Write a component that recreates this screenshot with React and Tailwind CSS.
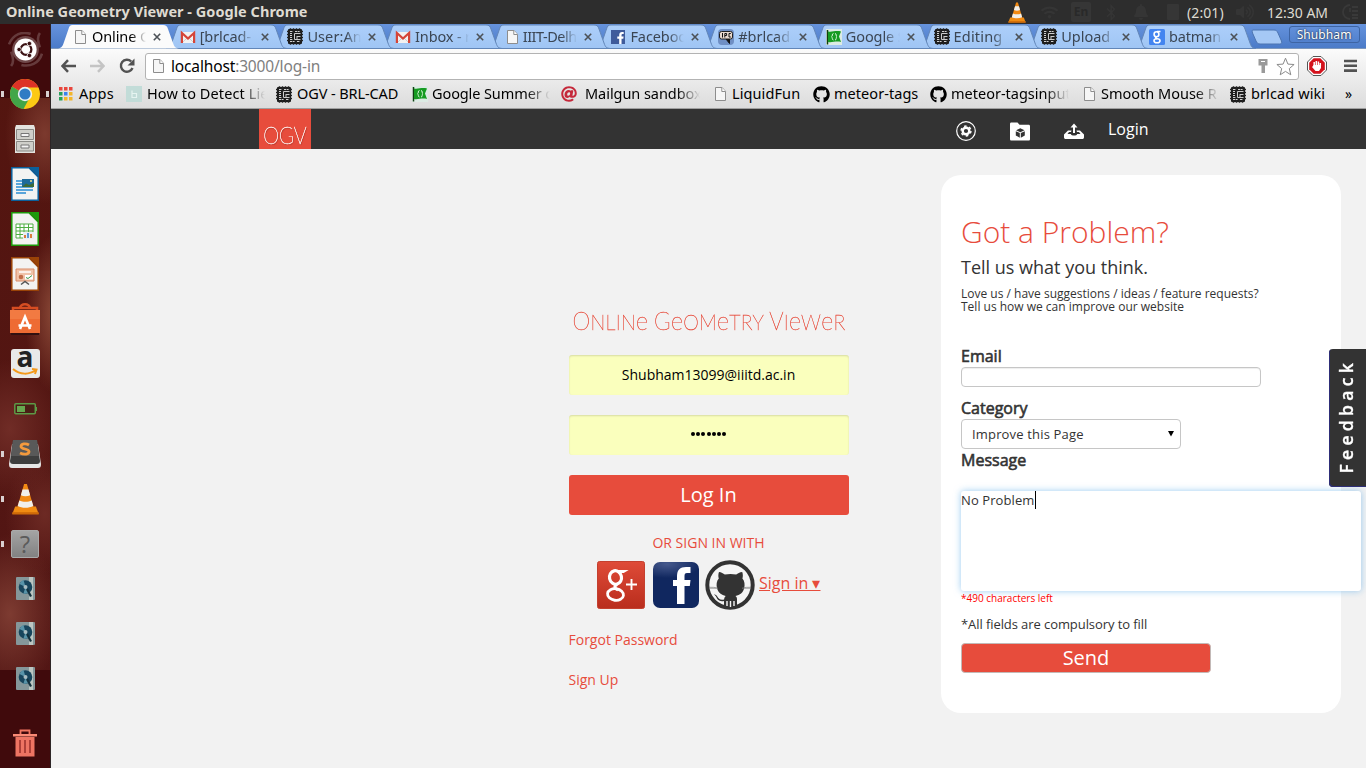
import React from "react";
import { FaGithub, FaFacebookF, FaAt, FaBluetoothB, FaBell, FaWifi, FaVolumeUp } from "react-icons/fa";

const PageIcon = () => (
  <svg className="h-4 w-[13px] shrink-0" viewBox="0 0 13 16">
    <path d="M1.5 1.5h6.5l3.5 3.8v9.2h-10z" fill="#f6f6f6" stroke="#8d8d8d" />
    <path d="M7.8 1.5v4h3.7" fill="#fff" stroke="#8d8d8d" />
  </svg>
);

const Gmail = () => (
  <svg className="h-4 w-4 shrink-0" viewBox="0 0 16 16">
    <path d="M1 3h14v11H1z" fill="#f3f1f1" />
    <path d="M2 14l5-5M14 14L9 9" stroke="#cfcfcf" />
    <path d="M1.9 14V4L8 9.500 14.100 4V14" fill="none" stroke="#d54438" strokeWidth="2.200" />
  </svg>
);

const Brl = () => (
  <svg className="h-[17px] w-4 shrink-0" viewBox="0 0 16 17">
    <rect x="1" y="1" width="14" height="15" rx="1" fill="#1b1b1b" />
    <path d="M0 3.500h16M0 6.500h16M0 9.500h16M0 12.500h16" stroke="#222" strokeWidth="1.600" />
    <path d="M3.500 .3v16.400M6.500 .3v16.400M9.500 .3v16.400M12.500 .3v16.400" stroke="#222" strokeWidth="1.600" />
    <path d="M3 3.500h3M8 3.500h5M3 5.500h2M3 7.500h2M3 9.500h2M3 11.500h3M3 13.500h5M10 13.500h3" stroke="#d0d0d0" strokeDasharray="2 .600" />
    <path d="M13.500 5.500H7.500v6h6" fill="none" stroke="#ccc" />
    <path d="M10 8.500h3.500M10 8v3" stroke="#ccc" />
  </svg>
);

const Flag = () => (
  <svg className="h-4 w-4 shrink-0" viewBox="0 0 16 16">
    <rect width="16" height="16" fill="#dcebe4" />
    <path d="M1.500 1v14.500" stroke="#123c12" strokeWidth="1.500" />
    <path d="M2 2.500c4 1 8-1.500 13 0l-2 5 2 5.500c-5-1.500-9 1-13 0z" fill="#169b22" />
    <path d="M7.500 4.500c-2 0-.5 3-2 3.300 1.500.3 0 3.200 2 3.200M9 4.500c2 0 .5 3 2 3.300-1.500.3 0 3.200-2 3.200" fill="none" stroke="#d7f5d7" />
  </svg>
);

const Fb = () => (
  <span className="flex h-[14px] w-[14px] shrink-0 items-end justify-end bg-[#3f5b9b]">
    <FaFacebookF className="h-3 w-[9px] text-white" />
  </span>
);

const Irc = () => (
  <svg className="h-4 w-4 shrink-0" viewBox="0 0 16 16">
    <rect width="16" height="16" rx="4" fill="#6f8fc4" />
    <path d="M8 10l3.500 4.500V10" fill="#111" stroke="#111" />
    <rect x="1.500" y="2.500" width="13" height="7.500" rx="2" fill="#e9d9cf" stroke="#222" />
    <path d="M4.500 4v4.500M6.800 8.500v-4h1.800v2H7M12.800 4.500h-1.800v3.500h1.800" fill="none" stroke="#111" />
  </svg>
);

const GSearch = () => (
  <svg className="h-4 w-4 shrink-0" viewBox="0 0 16 16">
    <rect width="16" height="16" rx="1.500" fill="#4384f0" />
    <g fill="none" stroke="#fff" strokeWidth="1.600">
      <ellipse cx="7.500" cy="5.200" rx="2.400" ry="2.500" />
      <path d="M8 2.500h3.500M8 7.800c-2 .5-2 1.500 0 2" />
      <ellipse cx="8" cy="11.700" rx="3" ry="2" />
    </g>
  </svg>
);

const TABS = [
  { t: "Online G", icon: <PageIcon />, w: "pl-[16px]", g: "gap-[5px]" },
  { t: "[brlcad-", icon: <Gmail />, k: "tracking-[-0.1px]" },
  { t: "User:An", icon: <Brl />, k: "tracking-[0.1px]" },
  { t: "Inbox - r", icon: <Gmail />, k: "tracking-[-0.15px]" },
  { t: "IIIT-Delh", icon: <PageIcon />, w: "pl-[17px]", g: "gap-[4px]", k: "tracking-[-0.5px]" },
  { t: "Faceboo", icon: <Fb />, w: "pl-[15px]", g: "gap-[5px]" },
  { t: "#brlcad", icon: <Irc />, k: "tracking-[0px]" },
  { t: "Google S", icon: <Flag /> },
  { t: "Editing", icon: <Brl />, k: "tracking-[0.2px]" },
  { t: "Upload", icon: <Brl />, k: "tracking-[0px]" },
  { t: "batman", icon: <GSearch />, k: "tracking-[-0.1px]" },
];

function Tab({ tab, active, index }) {
  return (
    <div className="relative h-[24px] w-[107.7px] shrink-0" style={{ zIndex: active ? 30 : 20 - index }}>
      <svg className="absolute top-0 left-0 h-[25px] w-[122px]" viewBox="0 0 122 25">
        <defs>
          <linearGradient id="tabfill" x1="0" y1="0" x2="0" y2="1">
            <stop offset="0" stopColor="#adcffa" />
            <stop offset="1" stopColor="#9fc5f4" />
          </linearGradient>
        </defs>
        <path
          d="M0 24.500C4 24 4.500 22 6 18L10.500 5C11.500 2 12 1 15 1H105C108 1 109 2 110 5L115 19C116.500 23 117 24 121 24.500z"
          fill={active ? "#fbfbfb" : "url(#tabfill)"}
          stroke={active ? "none" : "#6286b8"}
        />
      </svg>
      <div className={"relative flex h-full items-center pt-px " + (tab.w || "pl-[14px]") + " " + (tab.g || "gap-1")}>
        {tab.icon}
        <span className={"w-[54px] overflow-x-clip text-[14.5px] leading-[24px] whitespace-nowrap [mask-image:linear-gradient(90deg,#000_72%,transparent)] " + (tab.k || "tracking-[-0.1px]") + " -mt-[2px] " + (active ? "text-black" : "text-[#3b4654]")}>{tab.t}</span>
        <svg className="absolute top-[9px] left-[95px] h-2 w-2" viewBox="0 0 8 8">
          <path d="M.8.8l6.400 6.400M7.200.8L.8 7.200" stroke="#4c5157" strokeWidth="1.600" />
        </svg>
      </div>
    </div>
  );
}

const AppsIcon = () => (
  <svg className="ml-px h-[14px] w-[14px] shrink-0" viewBox="0 0 14 14">
    {["#e8453c", "#e8453c", "#e8453c", "#27a05a", "#3c82ee", "#f3b62a", "#27a05a", "#f3b62a", "#f3b62a"].map((c, i) => (
      <rect key={i} x={(i % 3) * 5} y={Math.floor(i / 3) * 5} width="3.500" height="3.500" fill={c} />
    ))}
  </svg>
);

const Tumb = () => (
  <svg className="h-4 w-4" viewBox="0 0 16 16">
    <rect width="16" height="16" fill="#c2dcd8" />
    <path d="M6 4.500v7h4.500v-4h-4" fill="none" stroke="#e6f4f1" strokeWidth="1.200" />
  </svg>
);

const MARKS = [
  { t: "Apps", icon: <AppsIcon />, c: "w-[68px]", x: "w-[21px]", k: "tracking-[0.2px]" },
  { t: "How to Detect Lie", icon: <Tumb />, c: "w-[150px]", x: "w-[21px]", k: "tracking-[0.1px]", f: "w-[118px]" },
  { t: "OGV - BRL-CAD", icon: <Brl />, c: "w-[136px]", x: "w-[21px]", k: "tracking-[-0.1px]" },
  { t: "Google Summer o", icon: <Flag />, c: "w-[149px]", x: "w-[20px]", k: "tracking-[-0.1px]", f: "w-[118px]" },
  { t: "Mailgun sandbox", icon: <FaAt className="h-4 w-4 text-[#c5283a]" />, c: "w-[153px]", x: "w-[24px]", k: "tracking-[-0.05px]", f: "w-[115px]" },
  { t: "LiquidFun", icon: <PageIcon />, c: "w-[99px]", x: "w-[18px]", k: "tracking-[0.1px]" },
  { t: "meteor-tags", icon: <FaGithub className="h-[17px] w-[17px] text-black" />, c: "w-[117px]", x: "w-[21px]", k: "tracking-[0.05px]" },
  { t: "meteor-tagsinput", icon: <FaGithub className="h-[17px] w-[17px] text-black" />, c: "w-[153px]", x: "w-[21px]", k: "tracking-[0px]", f: "w-[118px]" },
  { t: "Smooth Mouse R", icon: <PageIcon />, c: "w-[147px]", x: "w-[18px]", k: "tracking-[0px]", f: "w-[118px]" },
  { t: "brlcad wiki", icon: <Brl />, c: "w-[115px]", x: "w-[21px]", k: "tracking-[0.1px]" },
];

const Vlc = ({ className }) => (
  <svg className={className} viewBox="0 0 30 34">
    <path d="M4 25h22l3 8H1z" fill="#f08c12" />
    <path d="M1 31h28v2.500H1z" fill="#cf6a08" />
    <path d="M13.500 1h3L24 27c-4 3-14 3-18 0z" fill="#f28a14" />
    <path d="M11.800 7h6.400l1.700 6c-3 1.500-7 1.500-9.800 0zM8.400 18.500c4 2 9.500 2 13.200 0l1.700 6c-5 2.500-12 2.500-16.600 0z" fill="#f0efec" />
  </svg>
);

const Doc = ({ color, children }) => (
  <svg className="h-[34px] w-7" viewBox="0 0 28 34">
    <path d="M.8.8H18L27.200 10v23.200H.8z" fill="#f3f3f2" stroke={color} strokeWidth="1.500" />
    <path d="M18 0h10v10z" fill={color} />
    {children}
  </svg>
);

const Disk = () => (
  <svg className="h-[23px] w-[19px]" viewBox="0 0 19 23">
    <rect width="19" height="23" rx="1" fill="#85979a" />
    <path d="M13 0h4v23h-4z" fill="#bcc6c2" />
    <circle cx="9.500" cy="10" r="6.800" fill="#17455c" />
    <path d="M9.500 10L3.500 7a7 7 0 014-4zM9.500 10l4 5a7 7 0 01-6 1.500z" fill="#5793a8" />
    <circle cx="9.500" cy="10" r="2" fill="#a9bcc0" />
    <path d="M11 12l4 7.500" stroke="#12303d" strokeWidth="2.200" />
  </svg>
);

const Chrome = () => (
  <svg className="mt-px h-[30px] w-[30px]" viewBox="0 0 30 30">
    <circle cx="15" cy="15" r="15" fill="#fcc914" />
    <path d="M15 15L2 7.500A15 15 0 0013.500 30L20 18z" fill="#42a648" />
    <path d="M15 15L2 7.500A15 15 0 0128.500 8.500H15z" fill="#dd3227" />
    <circle cx="15" cy="15" r="7.200" fill="#eef2f4" />
    <circle cx="15" cy="15" r="5.600" fill="#2f7cc4" />
  </svg>
);

const LAUNCH = [
  { icon: (
    <svg className="mt-px h-[35px] w-[35px]" viewBox="0 0 34 34">
      <circle cx="17" cy="17" r="13" fill="#70494a" />
      <path d="M1 12C5 2 14-1 22 2M33 21c-3 10-12 13-20 11M31 1c-3 4-2 8 0 14M3 33c3-4 2-8 0-14" stroke="#7e5a5b" strokeWidth="2.500" fill="none" opacity=".6" />
      <circle cx="17" cy="17" r="10.800" fill="#fff" />
      <circle cx="17.500" cy="17" r="5.200" fill="none" stroke="#3c1315" strokeWidth="2.200" />
      <g fill="#3c1315" stroke="#fff" strokeWidth=".8"><circle cx="10.800" cy="17" r="2.200" /><circle cx="20.800" cy="11.200" r="2.200" /><circle cx="20.800" cy="22.800" r="2.200" /></g>
    </svg>) },
  { icon: <Chrome />, run: true, focus: true },
  { icon: (
    <svg className="h-7 w-[22px]" viewBox="0 0 22 28">
      <path d="M2 0h18l1 3v25H1V3z" fill="#e3e3df" />
      <path d="M2.500 4.500h17v10h-17zM2.500 16.500h17v9.500h-17z" fill="#cfcfca" stroke="#8a8a86" />
      <path d="M7 8.500h8v3H7zM7 20h8v3H7z" fill="#f3f3f3" stroke="#777" />
    </svg>) },
  { icon: (
    <Doc color="#0b609c"><path d="M5 14h7M5 17h7M5 20h17M5 23h17M5 26h10" stroke="#5aa5da" strokeWidth="2" /><path d="M11 12h12v8H11z" fill="#1d6a9a" /><path d="M11 20l4-3.500 3 1.500 5-2v4z" fill="#3d6a35" /><circle cx="20" cy="14" r="1" fill="#f4e18a" /></Doc>) },
  { icon: (
    <Doc color="#1d9a0a"><path d="M5 12h17v14H5z" fill="#fff" stroke="#4fae42" /><path d="M5 15.500h17M5 19h17M5 22.500h17M9 12v14M13 12v14M17.500 12v14" stroke="#4fae42" /><path d="M12 20h11v7H12z" fill="#e9eef2" /><path d="M14 26v-3M20 26v-4" stroke="#d97c3c" strokeWidth="2" /><path d="M17 26v-5" stroke="#5b9ad5" strokeWidth="2" /></Doc>) },
  { icon: (
    <Doc color="#9a4307"><path d="M5 12h18v12H5z" fill="#f0c3a9" stroke="#d98c68" /><path d="M8 15h12" stroke="#fff" strokeWidth="1.500" /><circle cx="10" cy="20" r="2.300" fill="#c26d48" /><path d="M14 18h8v4.500h-8z" fill="#fff" /><path d="M15 20.500l2 1 4-3" stroke="#3b9645" fill="none" /><path d="M10 27.500l4-3 4 3" stroke="#555" fill="none" strokeWidth="1.500" /></Doc>) },
  { icon: (
    <svg className="h-8 w-[30px]" viewBox="0 0 30 32">
      <path d="M0 7h30v23H0z" fill="#ee6b33" /><path d="M0 7h30v9H0z" fill="#f27a42" /><path d="M1 30h28v2H1z" fill="#321010" />
      <path d="M3 7V5h24v2M10 5c0-5 10-5 10 0" fill="none" stroke="#d64d22" strokeWidth="2.500" />
      <path d="M10 26l5-12 5 12M8.500 22.500h13" fill="none" stroke="#fff" strokeWidth="2.600" />
    </svg>) },
  { icon: (
    <span className="flex h-[29px] w-[29px] flex-col items-center rounded-[3px] bg-[#e9e9e9] font-['Open_Sans',sans-serif] text-[28px] font-bold text-[#222]">
      <span className="h-[19px] leading-[14px]">a</span>
      <svg className="h-2 w-[26px] shrink-0" viewBox="0 0 26 8"><path d="M1 1c7 6 16 6 23 1M20 1l4.500.5L23 6" fill="none" stroke="#f49a1c" strokeWidth="2" /></svg>
    </span>) },
  { icon: (
    <svg className="mt-px h-3 w-[23px]" viewBox="0 0 23 12"><rect x=".8" y=".8" width="20.500" height="10" rx="1" fill="#4a1e15" stroke="#5d9a46" strokeWidth="1.500" /><path d="M3 3h8v6H3z" fill="#66a84f" /><path d="M22.300 4v4" stroke="#5d9a46" strokeWidth="1.400" /></svg>) },
  { icon: (
    <svg className="h-[29px] w-8" viewBox="0 0 32 29"><path d="M3 5h26l3 20c0 3-1 4-3 4H3c-2 0-3-1-3-4z" fill="#e6e6e6" /><path d="M4 1h24l3 21c0 2-1 3-3 3H4c-2 0-3-1-3-3z" fill="#3e3e3e" /><path d="M4 1h24l2 16H2z" fill="#595959" /><path d="M20 6c-3-2-8-1.500-8 1.500s8 2 8 5-5 3.500-9 1.500" fill="none" stroke="#f39a3d" strokeWidth="2.800" /></svg>), run: true },
  { icon: <Vlc className="h-8 w-[29px]" />, run: true },
  { icon: (
    <span className="mt-px flex h-7 w-7 items-center justify-center rounded-[2px] border border-[#aaa] bg-gradient-to-b from-[#a4a4a4] to-[#828282] font-['Open_Sans',sans-serif] text-[24px] leading-[26px] text-[#5b5b5b]">?</span>), run: true },
  { icon: <Disk /> },
  { icon: <Disk /> },
  { icon: <Disk /> },
];

function Launcher() {
  return (
    <aside className="flex w-[51px] shrink-0 flex-col border-r border-[#2d2526] bg-[#400a0c] bg-[linear-gradient(180deg,#400a0c_0_74px,transparent_74px_646px,#400a0c_646px),radial-gradient(ellipse_40px_70px_at_45px_110px,#7c3a2e,transparent),radial-gradient(ellipse_30px_80px_at_55px_290px,#8c4a38,transparent),radial-gradient(ellipse_50px_70px_at_10px_405px,#702c26,transparent),radial-gradient(ellipse_40px_60px_at_45px_490px,#6d2a24,transparent),radial-gradient(ellipse_50px_80px_at_10px_590px,#7d3b31,transparent),linear-gradient(180deg,#54150f,#521615)] pt-[2px]">
      {LAUNCH.map((l, i) => (
        <div key={i} className="relative flex h-[45px] shrink-0 items-center justify-center">
          {l.run && <span className="absolute left-[1px] h-[6px] w-[3px] bg-[#d9d0d0]" />}
          {l.icon}
          {l.focus && <span className="absolute right-[1px] h-[6px] w-[3px] bg-[#d9d0d0]" />}
        </div>
      ))}
      <div className="mt-[28px] flex justify-center">
        <svg className="h-7 w-6" viewBox="0 0 24 28">
          <path d="M7.500 5V1.500h9V5" fill="none" stroke="#ef7560" strokeWidth="1.800" />
          <path d="M0 5h24v2.500H0z" fill="#fb8a76" />
          <path d="M2.500 8h19v19.500h-19z" fill="#ee7463" />
          <path d="M7 11v13M12 11v13M17 11v13" stroke="#a83b34" strokeWidth="1.800" />
        </svg>
      </div>
    </aside>
  );
}

const thin = "font-['Lato',sans-serif] font-thin";

function Octocat() {
  return (
    <svg className="h-[50px] w-[50px]" viewBox="0 0 50 50">
      <circle cx="25" cy="25" r="22.700" fill="#f5f5f5" stroke="#333" strokeWidth="4" />
      <path d="M14 12c-.8 2-.9 4.500-.2 6.500-2.300 2.500-2.600 6-1.800 9.500 1.200 5 4.700 7 8.700 8-1 1-1.500 2-1.600 3.500-4 .8-5.500-.6-6.800-3-.8-1.500-2-2.300-3.500-2 1.800.6 2.500 2.500 3.200 4 1.500 2.500 4 3 7 2.500V47h13v-7.500c0-1.800-.5-2.700-1.500-3.500 4.500-1 7.500-3 8.700-8 .8-3.500.5-7-1.800-9.500.7-2 .6-4.500-.2-6.500-2.400.2-4.500 1.500-6 2.600-3.800-.9-7.700-.9-11.400 0-1.600-1.200-3.500-2.400-5.800-2.600z" fill="#333" />
      <path d="M22 41v5M25.500 41v6M29 41v5" stroke="#f5f5f5" strokeWidth="1.400" />
      <path d="M4 27.300q5-.3 9 .8M4 28.300h9M46 27.300q-5-.3-9 .8M46 28.300h-9" stroke="#777" strokeWidth=".6" fill="none" />
    </svg>
  );
}

const E = () => <span className="text-[1.17em] lowercase">e</span>;

const field = "flex h-10 items-center justify-center rounded-[3px] bg-[#faffbd] pr-px pb-[2px] shadow-[inset_0_1px_2px_rgba(0,0,0,0.14)]";

function LoginForm() {
  return (
    <div className="ml-[518px] flex w-[280px] shrink-0 flex-col pt-[156px] text-[14px] text-[#e74c3c]">
      <h1 className={"flex h-[30px] scale-x-[0.9] items-center justify-center text-[22px] tracking-[0.3px] whitespace-pre uppercase [-webkit-text-stroke:0.4px_#e74c3c] " + thin}>
        <span><span className="text-[25px]">O</span>nlin<E /> <span className="text-[25px]">G</span><E />om<E />try <span className="text-[25px]">V</span>i<E />w<E />r</span>
      </h1>
      <div className={"mt-[20px] text-black " + field}>Shubham13099@iiitd.ac.in</div>
      <div className={"mt-5 gap-[1.3px] " + field}>
        {[0, 1, 2, 3, 4, 5, 6].map((i) => <span key={i} className="h-1 w-1 rounded-full bg-black" />)}
      </div>
      <button className="mt-5 flex h-10 items-center justify-center rounded-[3px] bg-[#e74c3c] pr-px text-[20px] text-white">Log In</button>
      <div className="mt-[18px] pr-px text-center leading-5">OR SIGN IN WITH</div>
      <div className="mt-[7px] flex h-[50px] items-center pl-7">
        <svg className="h-12 w-12" viewBox="0 0 48 48">
          <defs><linearGradient id="gp" x1="0" y1="0" x2="0" y2="1"><stop offset="0" stopColor="#df4b38" /><stop offset="1" stopColor="#b92d1d" /></linearGradient></defs>
          <rect x=".5" y=".5" width="47" height="47" rx="2" fill="url(#gp)" stroke="#c4402f" />
          <g fill="none" stroke="#fff">
            <ellipse cx="18.500" cy="16.500" rx="6" ry="6.800" strokeWidth="3.200" transform="rotate(-12 18.500 16.500)" />
            <path d="M19 9.700h10l-2.500 1.500h-4" strokeWidth="1.500" />
            <path d="M20 23.500c-4 2.500-2 4 1 5.500" strokeWidth="2.800" />
            <ellipse cx="18.500" cy="33.500" rx="8" ry="5.800" strokeWidth="2.800" transform="rotate(8 18.500 33.500)" />
            <path d="M34.500 18v11M29 23.500h11" strokeWidth="1.900" />
          </g>
        </svg>
        <span className="ml-2 flex h-[46px] w-[46px] items-center justify-center rounded-[7px] bg-[#10275f] bg-[radial-gradient(ellipse_34px_14px_at_14px_2px,#46598c,#10275f)] pt-px pl-[11px]">
          <svg className="h-[37px] w-[18px]" viewBox="0 0 18 37"><path d="M4 37V19H0v-6h4V9c0-6 3-9 9-9h4.500v6H14c-2 0-2.500 1-2.500 3v4h6l-.7 6h-5.300v18z" fill="#fff" /></svg>
        </span>
        <span className="ml-[6px]"><Octocat /></span>
        <span className="ml-1 pb-1 text-[16px] whitespace-nowrap underline">Sign in ▾</span>
      </div>
      <a className="mt-5 -ml-[0.5px] leading-5">Forgot Password</a>
      <a className="mt-5 -ml-[0.5px] leading-5">Sign Up</a>
    </div>
  );
}

const label = "text-[16px] leading-5 [-webkit-text-stroke:0.6px_#333]";

function FeedbackPanel() {
  return (
    <section className="mt-[26px] ml-[92px] flex h-[538px] w-[400px] shrink-0 flex-col rounded-[20px] bg-white px-5 pt-[37px] text-[13px] text-[#333]">
      <h2 className="text-[30px] leading-10 font-light text-[#e74c3c]">Got a Problem?</h2>
      <h3 className="mt-[5px] text-[18px] leading-5">Tell us what you think.</h3>
      <p className="mt-[10px] flex flex-col text-[12px] leading-[13px]"><span>Love us / have suggestions / ideas / feature requests?</span><span>Tell us how we can improve our website</span></p>
      <div className={"mt-[33px] " + label}>Email</div>
      <div className="mt-px h-5 w-[300px] rounded-[4px] border border-[#c6c6c6] bg-white shadow-[inset_0_1px_1px_rgba(0,0,0,0.07)]" />
      <div className={"mt-[11px] " + label}>Category</div>
      <div className="mt-px flex h-[30px] w-[220px] items-center justify-between rounded-[4px] border border-[#c6c6c6] pr-[6px] pl-[10px]">
        <span className="mt-[2px] tracking-[0.17px]">Improve this Page</span>
        <svg className="-mt-px h-[7px] w-[6px]" viewBox="0 0 7 7"><path d="M0 .5h7L3.500 7z" fill="#000" /></svg>
      </div>
      <div className={"mt-px " + label}>Message</div>
      <div className="mt-[21px] flex h-[100px] w-[400px] items-start rounded-[3px] bg-white shadow-[0_0_7px_rgba(102,175,233,0.65)]">
        <span className="leading-[19px] tracking-[0.1px]">No Problem</span>
        <span className="h-[18px] w-px bg-black" />
      </div>
      <div className="text-[10px] leading-[14px] text-[#f00]">*490 characters left</div>
      <div className="mt-[9px] leading-5 tracking-[-0.08px]">*All fields are compulsory to fill</div>
      <button className="mt-[9px] flex h-[30px] w-[250px] items-center justify-center rounded-[4px] border border-[#c3b9b7] bg-[#e74c3c] text-[20px] leading-none text-white">Send</button>
    </section>
  );
}

export default function App() {
  return (
    <div className="flex h-[768px] w-[1366px] flex-col overflow-hidden font-['Open_Sans',sans-serif]">
      <header className="flex h-6 shrink-0 items-center justify-between bg-[#2d2d2d] pl-[6px] font-['Noto_Sans',sans-serif] text-[14px] text-[#dfdbd2]">
        <span className="text-[14.500px] font-bold tracking-[0.03px] whitespace-nowrap">Online Geometry Viewer - Google Chrome</span>
        <div className="flex h-full w-[359px] items-center whitespace-nowrap text-[#353535]">
          <Vlc className="h-[21px] w-5" />
          <FaWifi className="ml-[14px] h-[15px] w-[17px]" />
          <span className="ml-[13px] flex h-5 w-5 items-center justify-center rounded-[2px] bg-[#363636] text-[12px] font-bold text-[#292929]">En</span>
          <FaBluetoothB className="ml-[14px] h-[17px] w-3" />
          <FaBell className="ml-[16px] h-4 w-4" />
          <span className="ml-[18px] h-4 w-3 rounded-[1px] bg-[#363636]" />
          <span className="ml-[8px] w-[37px] text-[#dfdbd2] tracking-[0.1px]">(2:01)</span>
          <FaVolumeUp className="ml-[11px] h-4 w-5" />
          <span className="ml-[12px] w-[62px] tracking-[0px] text-[#dfdbd2]">12:30 AM</span>
          <svg className="ml-[12px] h-[18px] w-[18px]" viewBox="0 0 18 18"><path d="M9 2a7 7 0 100 14M9 5v4M11 4h6M11 8h6M11 12h6M11 15h6" fill="none" stroke="#393939" strokeWidth="1.800" /></svg>
        </div>
      </header>
      <div className="flex min-h-0 flex-1">
        <Launcher />
        <main className="flex min-w-0 flex-1 flex-col">
          <div className="flex h-[25px] shrink-0 border-b border-[#7d98bd] bg-gradient-to-b from-[#6693dd] to-[#4b7bc8] pl-[7px] font-['Noto_Sans',sans-serif]">
            {TABS.map((t, i) => <Tab key={t.t} tab={t} index={i} active={i === 0} />)}
            <svg className="mt-[5px] ml-[8px] h-[16px] w-8 shrink-0" viewBox="0 0 32 16">
              <path d="M2 1h21c2 0 3 .8 4 3l3.500 8c.6 2 0 3-2 3H9c-2 0-3-1-4-3L1.500 4C1 2 1 1 2 1z" fill="#a5c8f5" stroke="#4c74b0" />
            </svg>
            <span className="mt-[2px] ml-[6px] flex h-[17px] w-[71px] shrink-0 items-center justify-center rounded-[3px] border border-[#3d64a3] pt-px text-[12px] tracking-[0.1px] text-white [text-shadow:0_0_2px_#000]">Shubham</span>
          </div>
          <div className="flex h-[60px] shrink-0 flex-col border-b border-[#a0a0a0] bg-gradient-to-b from-[#fbfbfb] to-[#dcdcdc] font-['Noto_Sans',sans-serif]">
            <div className="flex h-[31px] items-center pt-[3px] pl-[10px] text-[#555]">
              <svg className="h-[14px] w-[15px]" viewBox="0 0 15 14"><path d="M7 1.200L1.500 7 7 12.800M1.500 7H15" fill="none" stroke="#525252" strokeWidth="2.500" /></svg>
              <svg className="ml-[14px] h-[14px] w-[15px]" viewBox="0 0 15 14"><path d="M8 1.200L13.500 7 8 12.800M13.500 7H0" fill="none" stroke="#c4c4c4" strokeWidth="2.500" /></svg>
              <svg className="ml-[14px] h-4 w-4" viewBox="0 0 16 16"><path d="M13.500 10a6 6 0 11-1.300-6.500" fill="none" stroke="#525252" strokeWidth="2.400" /><path d="M15.500.5v7h-7z" fill="#525252" /></svg>
              <div className="ml-[10px] flex h-[27px] w-[1154px] items-center rounded-[3px] border border-[#b3b3b3] bg-white pl-[6px]">
                <PageIcon />
                <span className="ml-[6px] text-[15.500px] leading-6 tracking-[-0.15px] text-[#808080]"><span className="text-black">localhost</span>:3000/log-in</span>
                <svg className="ml-auto h-[16px] w-3" viewBox="0 0 12 16"><path d="M1.500 1h9v6.500H8V15H4.500V7.500h-3z" fill="#9a9a9a" /><path d="M4 3.500h4" stroke="#fff" /></svg>
                <svg className="mr-[3px] ml-[7px] h-[19px] w-[19px]" viewBox="0 0 19 19"><path d="M9.500 1.200l2.400 5.900 6.200.4-4.800 4.100 1.500 6.200-5.300-3.400-5.300 3.400 1.500-6.200L.9 7.500l6.200-.4z" fill="#fff" stroke="#8a8a8a" /></svg>
              </div>
              <svg className="ml-[8px] h-5 w-5" viewBox="0 0 20 20"><path d="M6 .5h8L19.500 6v8L14 19.500H6L.5 14V6z" fill="#fff" stroke="#555" /><path d="M6.700 2.200h6.600l4.500 4.500v6.600l-4.500 4.500H6.700l-4.500-4.500V6.700z" fill="#d4121c" /><path d="M7.200 10V6M9.300 9V5M11.400 9V5.500M13.300 10V7" stroke="#fff" strokeWidth="1.500" /><path d="M6.500 9H14v3l-2 3H8.500L5 11l1-1z" fill="#fff" /></svg>
              <svg className="ml-[17px] h-[14px] w-[14px]" viewBox="0 0 14 14"><path d="M0 2h13M0 6.800h13M0 11.600h13" stroke="#525252" strokeWidth="2.600" /></svg>
            </div>
            <div className="flex h-[28px] items-center pl-[7px] text-[14.500px] text-black">
              {MARKS.map((m) => (
                <div key={m.t} className={"flex shrink-0 items-center whitespace-nowrap " + m.c}>
                  <span className={"flex shrink-0 " + m.x}>{m.icon}</span>
                  <span className={m.k + " " + (m.f ? m.f + " overflow-x-clip [mask-image:linear-gradient(90deg,#000_80%,transparent)]" : "")}>{m.t}</span>
                </div>
              ))}
              <span className="text-[14px] leading-5">»</span>
            </div>
          </div>
          <nav className="flex h-10 shrink-0 bg-[#333] text-white">
            <div className="ml-[208px] flex h-10 w-[52px] items-end justify-center bg-[#e74c3c]">
              <span className={"scale-x-[0.84] text-[24px] leading-[28px] [-webkit-text-stroke:0.4px_#fff] [text-shadow:1px_1px_1px_rgba(0,0,0,0.6)] " + thin}>OGV</span>
            </div>
            <div className="ml-[645px] flex items-center pt-1">
              <svg className="h-5 w-5" viewBox="0 0 20 20"><circle cx="10" cy="10" r="9.300" fill="none" stroke="#fff" strokeWidth="1.200" /><circle cx="10" cy="10" r="3.300" fill="none" stroke="#fff" strokeWidth="2.400" /><circle cx="10" cy="10" r="4.900" fill="none" stroke="#fff" strokeWidth="1.500" strokeDasharray="2.560 2.570" /></svg>
              <svg className="ml-[34px] h-[19px] w-5" viewBox="0 0 20 19"><path d="M0 2C0 .8.800.5 1.500.5h6L9.500 2.800h9c1 0 1.500.5 1.500 1.500V17c0 1-.5 1.500-1.500 1.500h-17C.5 18.500 0 18 0 17z" fill="#fff" /><path d="M10.300 6.300l4.200 2-4.200 2-4.200-2zM5.800 9.200l4 1.900v4.600l-4-2.200zM14.800 9.200l-4 1.900v4.600l4-2.200z" fill="#333" /></svg>
              <svg className="ml-[34px] h-4 w-5" viewBox="0 0 20 16"><path d="M10 10V3" stroke="#fff" strokeWidth="2" /><path d="M6.500 4.500L10 .5l3.500 4" fill="#fff" /><path d="M4 7.500h3.500L7 9H5L3.500 11h3.300c.5 2 6 2 6.400 0h3.300L15 9h-2l-.5-1.500H16l4 4V14c0 1.500-.5 2-2 2H2c-1.500 0-2-.5-2-2v-2.500z" fill="#fff" /></svg>
              <span className="-mt-[5px] ml-[24px] text-[16px] leading-5">Login</span>
            </div>
          </nav>
          <div className="relative flex flex-1 items-start bg-[#f2f2f2]">
            <LoginForm />
            <FeedbackPanel />
            <div className="absolute top-[200px] right-0 flex h-[138px] w-[37px] items-center justify-center rounded-l-[4px] bg-[#333] pr-[3px] text-[17.500px] font-semibold text-white shadow-[inset_1px_-1px_0_#2e2e78]">
              <span className="mt-[-4px] rotate-180 tracking-[4.300px] whitespace-nowrap [-webkit-text-stroke:0.3px_#fff] [writing-mode:vertical-rl]">Feedback</span>
            </div>
          </div>
        </main>
      </div>
    </div>
  );
}
